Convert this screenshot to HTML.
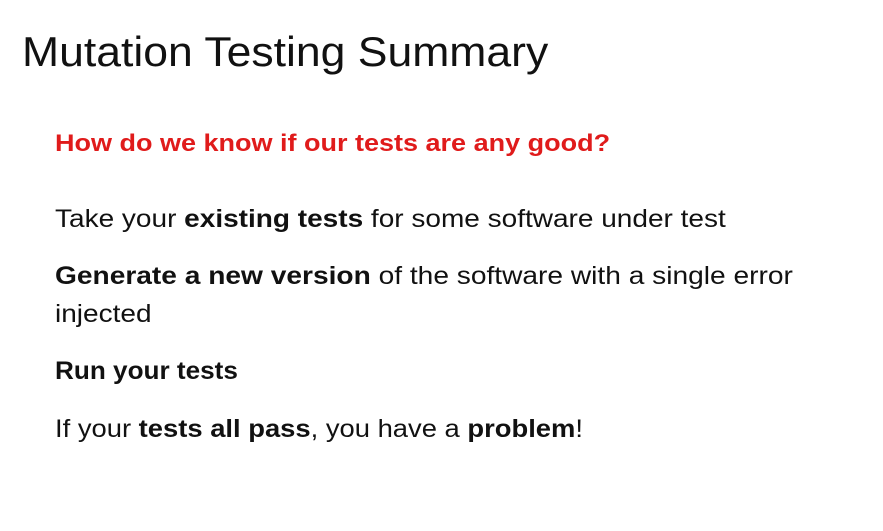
<!DOCTYPE html>
<html><head><meta charset="utf-8"><style>
html,body{margin:0;padding:0;background:#fff;width:883px;height:531px;overflow:hidden}
body{font-family:"Liberation Sans",sans-serif;color:#111;position:relative}
.t{position:absolute;white-space:nowrap;line-height:1;transform-origin:0 50%}
.title{left:22px;top:31px;font-size:42px;font-weight:300;color:#111;transform:scaleX(1.06)}
.red{left:55px;top:132px;font-size:24px;font-weight:bold;color:#e01b1b;transform:scaleX(1.125)}
.b{font-size:25px;left:55px}
b{font-weight:bold}
</style></head><body>
<div class="t title">Mutation Testing Summary</div>
<div class="t red">How do we know if our tests are any good?</div>
<div class="t b" style="top:207px;transform:scaleX(1.12)">Take your <b>existing tests</b> for some software under test</div>
<div class="t b" style="top:264px;transform:scaleX(1.125)"><b>Generate a new version</b> of the software with a single error</div>
<div class="t b" style="top:302px;transform:scaleX(1.12)">injected</div>
<div class="t b" style="top:359px;transform:scaleX(1.045)"><b>Run your tests</b></div>
<div class="t b" style="top:417px;transform:scaleX(1.095)">If your <b>tests all pass</b>, you have a <b>problem</b>!</div>
</body></html>
